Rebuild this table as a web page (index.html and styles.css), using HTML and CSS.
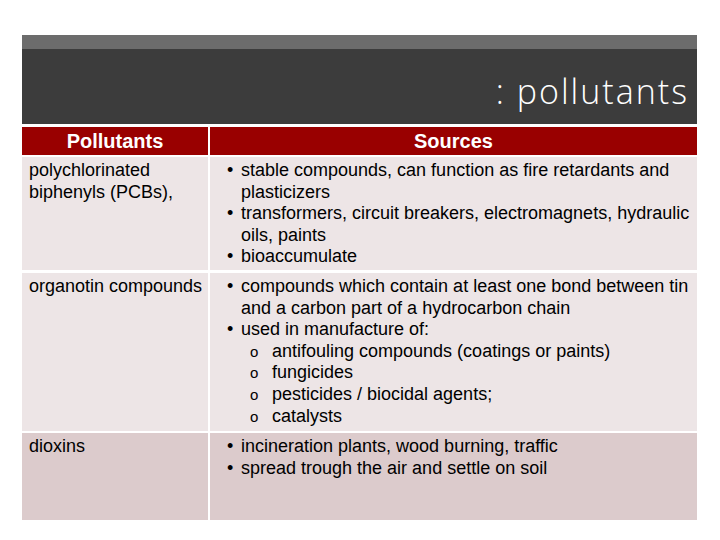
FILE: index.html
```html
<!DOCTYPE html>
<html>
<head>
<meta charset="utf-8">
<link rel="stylesheet" href="styles.css">
</head>
<body>
<div class="slide">
  <div class="topbar"></div>
  <div class="titlebar"><h1 class="title">: pollutants</h1></div>
  <div class="table">
    <div class="th">Pollutants</div>
    <div class="th">Sources</div>

    <div class="td name light r1">polychlorinated biphenyls (PCBs),</div>
    <div class="td light r1">
      <ul class="list">
        <li>stable compounds, can function as fire retardants and plasticizers</li>
        <li>transformers, circuit breakers, electromagnets, hydraulic oils, paints</li>
        <li>bioaccumulate</li>
      </ul>
    </div>

    <div class="td name light r2">organotin compounds</div>
    <div class="td light r2">
      <ul class="list">
        <li>compounds which contain at least one bond between tin and a carbon part of a hydrocarbon chain</li>
        <li><div>used in manufacture of:
          <ul class="sublist">
            <li>antifouling compounds (coatings or paints)</li>
            <li>fungicides</li>
            <li>pesticides / biocidal agents;</li>
            <li>catalysts</li>
          </ul></div>
        </li>
      </ul>
    </div>

    <div class="td name dark r3">dioxins</div>
    <div class="td dark r3">
      <ul class="list">
        <li>incineration plants, wood burning, traffic</li>
        <li>spread trough the air and settle on soil</li>
      </ul>
    </div>
  </div>
</div>
</body>
</html>
```
FILE: styles.css
```css
html, body {
  margin: 0;
  padding: 0;
  background: #ffffff;
}
.slide {
  width: 675px;
  padding: 35px 0 0 22px;
}
.topbar {
  height: 14px;
  background: #6c6c6c;
}
.titlebar {
  height: 75px;
  background: #3c3c3c;
  display: flex;
  justify-content: flex-end;
  align-items: flex-end;
  padding-right: 8px;
}
.title {
  margin: 0 0 13px 0;
  font-family: "Open Sans", sans-serif;
  font-weight: 300;
  font-size: 34px;
  letter-spacing: 2px;
  line-height: 40px;
  color: #ffffff;
}
.table {
  margin-top: 3px;
  display: grid;
  grid-template-columns: 186px 487px;
  grid-template-rows: 28px 113px 159px 87px;
  column-gap: 2px;
  row-gap: 2px;
  font-family: "Liberation Sans", Arial, sans-serif;
  font-size: 18px;
  line-height: 21.6px;
  color: #000000;
}
.th {
  background: #990000;
  color: #ffffff;
  font-weight: bold;
  font-size: 20px;
  text-align: center;
  line-height: 28px;
}
.td {
  padding: 3px 7px 0 7px;
}
.td.name {
  padding-right: 0;
}
.light { background: #ede5e6; }
.dark { background: #dccbcc; }
.r2 { margin-top: 1px; }
.list {
  list-style: none;
  margin: 0;
  padding: 0 0 0 10px;
}
.list > li {
  display: grid;
  grid-template-columns: 14px 1fr;
}
.list > li::before {
  content: "\2022";
}
.sublist {
  list-style: none;
  margin: 0;
  padding: 0 0 0 9px;
}
.sublist > li {
  display: grid;
  grid-template-columns: 22px 1fr;
}
.sublist > li::before {
  content: "o";
  font-size: 15px;
}
```
